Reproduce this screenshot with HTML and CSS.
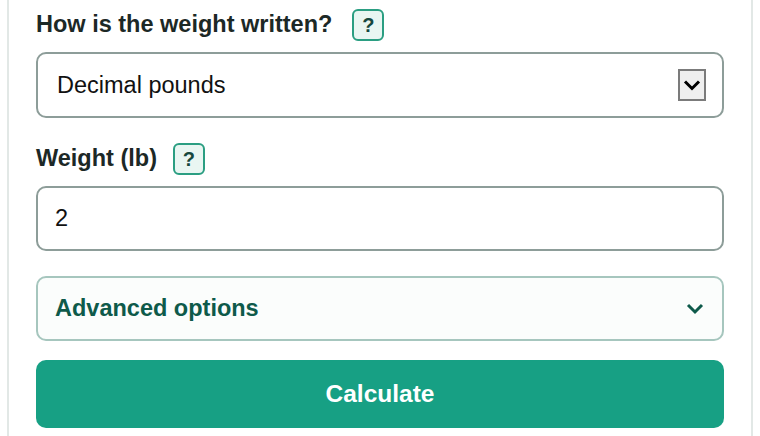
FILE: index.html
```html
<!DOCTYPE html>
<html lang="en">
<head>
<meta charset="utf-8">
<title>Weight calculator</title>
<link rel="stylesheet" href="styles.css">
</head>
<body>
<main class="card">
  <div class="field">
    <div class="label-row label-row--wide">
      <label class="label" for="format">How is the weight written?</label>
      <button class="help" type="button" aria-label="Help">?</button>
    </div>
    <div class="select" id="format" role="combobox" tabindex="0">
      <span class="select-value">Decimal pounds</span>
      <span class="select-btn">
        <svg width="18" height="12" viewBox="0 0 18 12" aria-hidden="true"><path d="M2 2.5 L9 9.5 L16 2.5" fill="none" stroke="#000" stroke-width="3"/></svg>
      </span>
    </div>
  </div>

  <div class="field">
    <div class="label-row">
      <label class="label" for="weight">Weight (lb)</label>
      <button class="help" type="button" aria-label="Help">?</button>
    </div>
    <input class="input" id="weight" type="text" value="2">
  </div>

  <details class="advanced">
    <summary class="advanced-summary">
      <span>Advanced options</span>
      <svg width="18" height="12" viewBox="0 0 18 12" aria-hidden="true"><path d="M2 2 L9 9 L16 2" fill="none" stroke="#0e5a4a" stroke-width="3"/></svg>
    </summary>
  </details>

  <button class="calc" type="button">Calculate</button>
</main>
</body>
</html>
```

FILE: styles.css
```css
* { box-sizing: border-box; }
html, body { margin: 0; padding: 0; background: #ffffff; }
body {
  font-family: "Liberation Sans", Arial, sans-serif;
  color: #1c2826;
}
.card {
  margin: 0 7px;
  min-height: 436px;
  border-left: 2px solid #e2e8e6;
  border-right: 2px solid #e2e8e6;
  padding: 9px 27px 0;
  background: #fff;
}
.field { margin-bottom: 25px; }
.label-row {
  display: flex;
  align-items: center;
  gap: 16px;
  height: 32px;
  margin-bottom: 11px;
}
.label-row--wide { gap: 20px; }
.label {
  font-size: 23.5px;
  font-weight: 700;
  line-height: 28px;
  margin-top: -3px;
  color: #1c2826;
}
.help {
  width: 32px;
  height: 32px;
  padding: 0;
  border: 2px solid #2b9e82;
  border-radius: 6px;
  background: #e9f6f2;
  color: #16483e;
  font-family: "Liberation Sans", Arial, sans-serif;
  font-size: 20px;
  font-weight: 700;
  line-height: 28px;
  text-align: center;
}
.select {
  display: flex;
  align-items: center;
  justify-content: space-between;
  height: 66px;
  border: 2px solid #8d9d99;
  border-radius: 10px;
  padding: 0 16px 0 19px;
  font-size: 23.5px;
  color: #111;
}
.select-btn {
  display: flex;
  align-items: center;
  justify-content: center;
  width: 28px;
  height: 32px;
  background: #efefef;
  border: 2px solid #7b7b7b;
}
.input {
  display: block;
  width: 100%;
  height: 65px;
  border: 2px solid #8d9d99;
  border-radius: 10px;
  padding: 0 17px;
  font-family: "Liberation Sans", Arial, sans-serif;
  font-size: 23.5px;
  color: #111;
  background: #fff;
  outline: none;
}
.advanced {
  border: 2px solid #a6c6be;
  border-radius: 10px;
  background: #fbfdfc;
  margin-bottom: 19px;
}
.advanced-summary {
  list-style: none;
  display: flex;
  align-items: center;
  justify-content: space-between;
  height: 61px;
  padding: 0 18px 0 17px;
  font-size: 23.5px;
  font-weight: 700;
  color: #0e5a4a;
  cursor: pointer;
}
.advanced-summary::-webkit-details-marker { display: none; }
.calc {
  display: block;
  width: 100%;
  height: 68px;
  border: 0;
  border-radius: 10px;
  background: #17a084;
  color: #fff;
  font-family: "Liberation Sans", Arial, sans-serif;
  font-size: 24.5px;
  font-weight: 700;
}
```
